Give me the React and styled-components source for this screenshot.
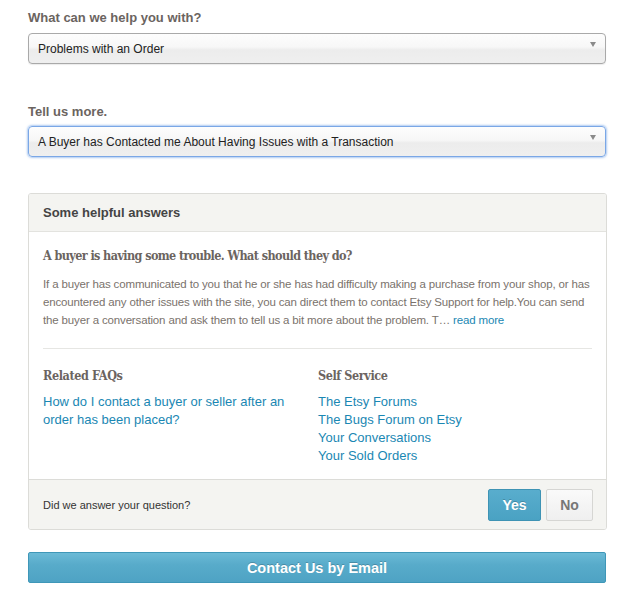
import React from "react";
import styled, { createGlobalStyle } from "styled-components";

const Global = createGlobalStyle`
  html, body { margin: 0; padding: 0; background: #fff; }
  body { font-family: "Liberation Sans", Arial, sans-serif; }
`;

const Page = styled.div`
  width: 579px;
  padding: 10px 0 0 28px;
`;

const Field = styled.div`
  display: flex;
  flex-direction: column;
  margin-bottom: ${(p) => p.$mb || 0}px;
`;

const Label = styled.div`
  font-size: 13px;
  font-weight: bold;
  color: #6b645f;
  line-height: 16px;
  margin-bottom: ${(p) => p.$mb}px;
`;

const Select = styled.div`
  position: relative;
  box-sizing: border-box;
  height: 31px;
  width: 578px;
  border: 1px solid ${(p) => (p.$focus ? "#7aa7e6" : "#a9a9a9")};
  border-radius: 4px;
  background: linear-gradient(#fdfdfd 0%, #f7f7f7 45%, #ececec 55%, #efefef 100%);
  box-shadow: ${(p) => (p.$focus ? "0 0 2px 1px rgba(110,160,230,0.55)" : "0 1px 1px rgba(0,0,0,0.08)")};
  display: flex;
  align-items: center;
  padding-left: 9px;
  font-size: 12px;
  color: #222;
`;

const Arrow = styled.span`
  position: absolute;
  right: 9px;
  top: 8px;
  width: 0;
  height: 0;
  border-left: 3px solid transparent;
  border-right: 3px solid transparent;
  border-top: 5px solid #8a8a8a;
`;

const Panel = styled.div`
  box-sizing: border-box;
  width: 579px;
  border: 1px solid #dcdcd8;
  border-radius: 3px;
  overflow: hidden;
  background: #fff;
`;

const PanelHeader = styled.div`
  background: #f4f4f1;
  border-bottom: 1px solid #e3e3df;
  height: 37px;
  display: flex;
  align-items: center;
  padding-left: 14px;
  font-size: 13px;
  font-weight: bold;
  color: #444;
`;

const PanelBody = styled.div`
  padding: 14px 14px 0 14px;
`;

const ArticleTitle = styled.div`
  font-family: "DejaVu Serif Condensed", "DejaVu Serif", serif;
  font-weight: bold;
  font-size: 12.5px;
  letter-spacing: -0.6px;
  color: #6b645f;
  line-height: 20px;
  margin-bottom: 9px;
`;

const Para = styled.p`
  margin: 0;
  font-size: 11.5px;
  letter-spacing: -0.15px;
  line-height: 18px;
  color: #7a726c;
  white-space: nowrap;
`;

const Link = styled.a`
  color: #1a87b3;
  text-decoration: none;
`;

const Divider = styled.div`
  height: 1px;
  background: #e6e6e3;
  margin: 19px 0 18px 0;
`;

const Columns = styled.div`
  display: grid;
  grid-template-columns: 275px 1fr;
  padding-bottom: 14px;
`;

const ColTitle = styled.div`
  font-family: "DejaVu Serif Condensed", "DejaVu Serif", serif;
  font-weight: bold;
  font-size: 12.5px;
  letter-spacing: -0.4px;
  color: #6b645f;
  line-height: 18px;
  margin-bottom: 8px;
`;

const LinkList = styled.div`
  display: flex;
  flex-direction: column;
  font-size: 13px;
  line-height: 18px;
  max-width: 250px;
`;

const Footer = styled.div`
  background: #f4f4f1;
  border-top: 1px solid #dcdcd8;
  height: 49px;
  display: flex;
  align-items: center;
  justify-content: space-between;
  padding: 0 13px 0 14px;
`;

const FooterText = styled.div`
  font-size: 11px;
  color: #333;
`;

const Buttons = styled.div`
  display: flex;
  gap: 5px;
`;

const SmallButton = styled.button`
  box-sizing: border-box;
  height: 32px;
  width: ${(p) => p.$w}px;
  border-radius: 2px;
  font-family: "Liberation Sans", Arial, sans-serif;
  font-weight: bold;
  font-size: 14px;
  cursor: pointer;
  border: 1px solid ${(p) => (p.$primary ? "#3e93b4" : "#d6d6d3")};
  background: ${(p) => (p.$primary ? "linear-gradient(#59adcd, #4aa2c3)" : "linear-gradient(#fafafa, #efefef)")};
  color: ${(p) => (p.$primary ? "#fff" : "#777")};
  text-shadow: ${(p) => (p.$primary ? "0 -1px 0 rgba(0,0,0,0.2)" : "none")};
`;

const ContactButton = styled.button`
  box-sizing: border-box;
  margin-top: 22px;
  width: 578px;
  height: 31px;
  border: 1px solid #3f97b8;
  border-radius: 2px;
  background: linear-gradient(#6bbad6, #58abca 40%, #4ea3c4);
  color: #fff;
  font-family: "Liberation Sans", Arial, sans-serif;
  font-weight: bold;
  font-size: 14.5px;
  text-shadow: 0 -1px 0 rgba(0,0,0,0.2);
  cursor: pointer;
`;

export default function App() {
  return (
    <>
      <Global />
      <Page>
        <Field $mb={40}>
          <Label $mb={7}>What can we help you with?</Label>
          <Select>
            Problems with an Order
            <Arrow />
          </Select>
        </Field>
        <Field $mb={36}>
          <Label $mb={6}>Tell us more.</Label>
          <Select $focus>
            A Buyer has Contacted me About Having Issues with a Transaction
            <Arrow />
          </Select>
        </Field>
        <Panel>
          <PanelHeader>Some helpful answers</PanelHeader>
          <PanelBody>
            <ArticleTitle>A buyer is having some trouble. What should they do?</ArticleTitle>
            <Para>
              If a buyer has communicated to you that he or she has had difficulty making a purchase from your shop, or has
              <br />
              encountered any other issues with the site, you can direct them to contact Etsy Support for help.You can send
              <br />
              the buyer a conversation and ask them to tell us a bit more about the problem. T… <Link href="#">read more</Link>
            </Para>
            <Divider />
            <Columns>
              <div>
                <ColTitle>Related FAQs</ColTitle>
                <LinkList>
                  <Link href="#">How do I contact a buyer or seller after an order has been placed?</Link>
                </LinkList>
              </div>
              <div>
                <ColTitle>Self Service</ColTitle>
                <LinkList>
                  <Link href="#">The Etsy Forums</Link>
                  <Link href="#">The Bugs Forum on Etsy</Link>
                  <Link href="#">Your Conversations</Link>
                  <Link href="#">Your Sold Orders</Link>
                </LinkList>
              </div>
            </Columns>
          </PanelBody>
          <Footer>
            <FooterText>Did we answer your question?</FooterText>
            <Buttons>
              <SmallButton $primary $w={53}>Yes</SmallButton>
              <SmallButton $w={47}>No</SmallButton>
            </Buttons>
          </Footer>
        </Panel>
        <ContactButton>Contact Us by Email</ContactButton>
      </Page>
    </>
  );
}
